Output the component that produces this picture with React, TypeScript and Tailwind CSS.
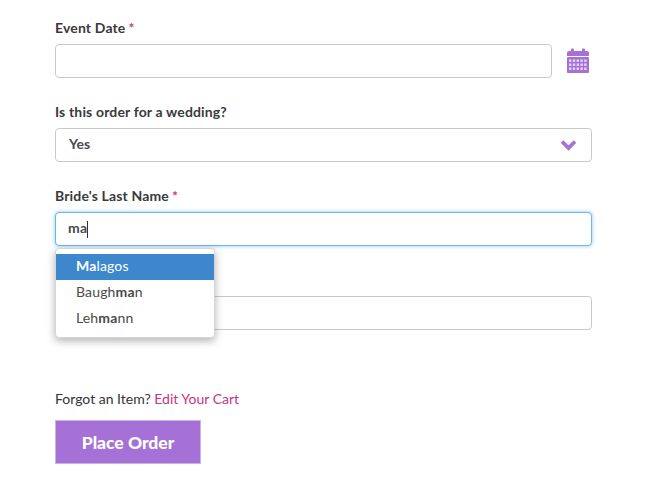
import React from "react";

const Star = () => <span className="text-[#d0317f] ml-[3px]">*</span>;

function Label({ children }: { children?: React.ReactNode }) {
  return <div className="h-5 mb-[6px] text-[14px] leading-5 font-bold text-[#3a3a3a] tracking-[0.15px]">{children}</div>;
}

const box = "h-[34px] border border-[#c9c9c9] rounded-[4px] bg-white";

export default function App() {
  return (
    <div className="w-[662px] h-[490px] bg-white pt-[18px] pl-[55px] overflow-hidden" style={{ fontFamily: "Lato, 'Noto Sans', sans-serif" }}>
      <div className="w-[537px]">
        <div className="mb-6">
          <Label>Event Date<Star /></Label>
          <div className="flex items-center">
            <div className={`${box} w-[497px]`} />
            <svg className="ml-[14px] -mt-[1px]" width="24" height="26" viewBox="0 0 24 26">
              <rect x="5" y="0.5" width="3" height="4" rx="1" fill="#a571d6" />
              <rect x="16" y="0.5" width="3" height="4" rx="1" fill="#a571d6" />
              <path d="M1 5a2 2 0 0 1 2-2h18a2 2 0 0 1 2 2V8H1z" fill="#a571d6" />
              <rect x="1" y="9" width="22" height="16" rx="1" fill="#a571d6" />
              {[0, 1, 2].map((r) =>
                [0, 1, 2, 3, 4].map((c) => (
                  <rect key={`${r}-${c}`} x={3 + c * 3.8} y={11.5 + r * 4} width="2.4" height="2.4" fill="#e6d8f5" />
                ))
              )}
            </svg>
          </div>
        </div>
        <div className="mb-6">
          <Label>Is this order for a wedding?</Label>
          <div className={`${box} flex items-center justify-between pl-[13px] pr-[14px]`}>
            <span className="text-[14px] leading-4 font-bold text-[#4a4a4a] -mt-[3px]">Yes</span>
            <svg className="-mt-[1px]" width="17" height="12" viewBox="0 0 17 12">
              <path d="M2 2.5 8.5 9 15 2.5" fill="none" stroke="#a571d6" strokeWidth="3.8" />
            </svg>
          </div>
        </div>
        <div className="mb-6 relative">
          <Label>Bride's Last Name<Star /></Label>
          <div className="h-[34px] border border-[#6fb4ea] rounded-[4px] bg-white shadow-[0_0_4px_#8fc6f2] flex items-center pl-[12px]">
            <span className="text-[14px] leading-4 font-bold text-[#4a4a4a] tracking-[0.2px] -mt-[2px]">ma</span>
            <span className="w-px h-[17px] bg-[#333]" />
          </div>
          <div className="absolute left-0 top-[62px] w-[160px] h-[90px] z-10 bg-white border border-[#d6d6d6] rounded-[4px] shadow-[0_3px_8px_rgba(0,0,0,0.3)] pt-[5px] text-[14px] text-[#4a4a4a] tracking-[0.15px]">
            <div className="h-[26px] leading-[24px] pl-5 bg-[#3d87cd] text-white"><b>Ma</b>lagos</div>
            <div className="h-[26px] leading-[24px] pl-5">Baugh<b>ma</b>n</div>
            <div className="h-[26px] leading-[24px] pl-5">Leh<b>ma</b>nn</div>
          </div>
        </div>
        <div>
          <Label />
          <div className={box} />
        </div>
      </div>
      <div className="mt-[59px] h-5 leading-5 text-[14px] text-[#333]">
        Forgot an Item? <a className="text-[#c9347f]">Edit Your Cart</a>
      </div>
      <button className="block mt-[11px] w-[146px] h-[44px] pt-[2px] bg-[#a571d6] border border-[#c9b3e3] text-white text-[17.5px] font-black">
        Place Order
      </button>
    </div>
  );
}
